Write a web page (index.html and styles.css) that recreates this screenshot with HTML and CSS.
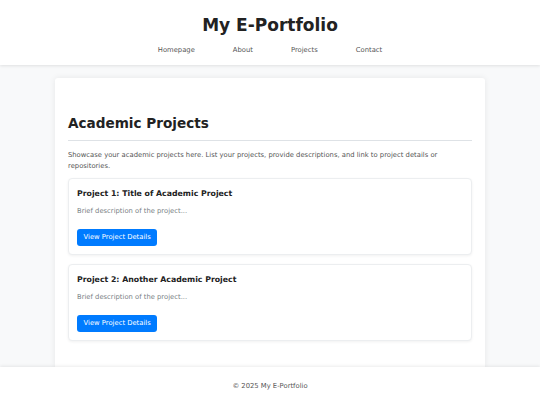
FILE: index.html
```html
<!DOCTYPE html>
<html lang="en">
<head>
<meta charset="utf-8">
<title>My E-Portfolio</title>
<link rel="stylesheet" href="styles.css">
</head>
<body>
<header class="site-header">
  <h1 class="site-title">My E-Portfolio</h1>
  <nav class="site-nav">
    <a href="#">Homepage</a>
    <a href="#">About</a>
    <a href="#">Projects</a>
    <a href="#">Contact</a>
  </nav>
</header>
<main class="page">
  <section class="container">
    <h2 class="section-title">Academic Projects</h2>
    <p class="intro">Showcase your academic projects here. List your projects, provide descriptions, and link to project details or repositories.</p>
    <div class="card">
      <h3 class="card-title">Project 1: Title of Academic Project</h3>
      <p class="card-desc">Brief description of the project...</p>
      <a class="btn" href="#">View Project Details</a>
    </div>
    <div class="card">
      <h3 class="card-title">Project 2: Another Academic Project</h3>
      <p class="card-desc">Brief description of the project...</p>
      <a class="btn" href="#">View Project Details</a>
    </div>
  </section>
</main>
<footer class="site-footer">© 2025 My E-Portfolio</footer>
</body>
</html>
```

FILE: styles.css
```css
* { box-sizing: border-box; }
html, body { margin: 0; padding: 0; }
body {
  font-family: "DejaVu Sans", sans-serif;
  color: #212529;
  background: #f8f9fa;
}
.site-header {
  background: #fff;
  height: 65px;
  padding-top: 15px;
  box-shadow: 0 1px 3px rgba(0,0,0,0.1);
  position: relative;
  z-index: 1;
  text-align: center;
}
.site-title {
  margin: 0;
  font-size: 17px;
  line-height: 20px;
  font-weight: bold;
  color: #222;
}
.site-nav {
  margin-top: 9px;
  display: flex;
  justify-content: center;
  gap: 38px;
  font-size: 6.8px;
  line-height: 12px;
}
.site-nav a { color: #555; text-decoration: none; }
.page {
  padding-top: 13px;
}
.container {
  width: 430px;
  margin: 0 auto;
  background: #fff;
  padding: 36px 13px 26px;
  box-shadow: 0 0 6px rgba(0,0,0,0.08);
  border-radius: 3px 3px 0 0;
}
.section-title {
  margin: 0;
  font-size: 13.6px;
  line-height: 18px;
  font-weight: bold;
  color: #222;
  padding-bottom: 8px;
  border-bottom: 1px solid #dee2e6;
}
.intro {
  margin: 9px 0 6px;
  font-size: 6.8px;
  line-height: 11px;
  color: #555;
}
.card {
  border: 1px solid #eceef0;
  border-radius: 4px;
  padding: 8px 8px 8px;
  box-shadow: 0 1px 3px rgba(0,0,0,0.06);
  background: #fff;
}
.card + .card { margin-top: 9px; }
.card-title {
  margin: 0;
  font-size: 7.8px;
  line-height: 13px;
  font-weight: bold;
  color: #222;
}
.card-desc {
  margin: 6px 0 12px;
  font-size: 6.8px;
  line-height: 11px;
  color: #7a7f85;
}
.btn {
  display: block;
  width: fit-content;
  background: #007bff;
  color: #fff;
  text-decoration: none;
  font-size: 6.8px;
  line-height: 17px;
  height: 17px;
  padding: 0 6.5px;
  border-radius: 3px;
}
.site-footer {
  background: #fff;
  height: 38px;
  line-height: 38px;
  text-align: center;
  font-size: 6.8px;
  color: #555;
  box-shadow: 0 -1px 3px rgba(0,0,0,0.08);
  position: relative;
}
```
